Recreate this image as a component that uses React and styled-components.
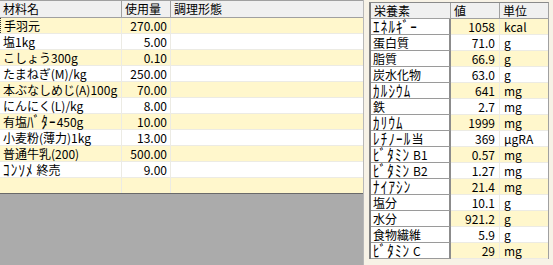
import React from "react";
import styled, { createGlobalStyle } from "styled-components";

const Global = createGlobalStyle`
  html, body { margin: 0; padding: 0; background: #f7f2e6; }
  body { font-family: "Noto Sans CJK JP", "Liberation Sans", sans-serif; font-size: 12px; color: #000; }
`;

const Screen = styled.div`
  width: 553px;
  height: 265px;
  display: flex;
  overflow: hidden;
  background: #f7f2e6;
`;

const LeftPanel = styled.div`
  width: 366px;
  display: flex;
  flex-direction: column;
  border-right: 1px solid #b8b8b8;
  background: #ababab;
`;

const Splitter = styled.div`
  width: 5px;
  background: #f7f2e6;
`;

const LeftRow = styled.div`
  display: grid;
  grid-template-columns: 122px 49px 1fr;
  height: ${(p) => (p.$head ? "16px" : "15px")};
  background: ${(p) => (p.$head ? "#f0f0f0" : p.$alt ? "#fff7cc" : "#ffffff")};
  border-bottom: 1px solid ${(p) => (p.$head ? "#a0a0a0" : p.$last ? "#6a6a6a" : "#ecebe4")};
  border-top: ${(p) => (p.$head ? "1px solid #a0a0a0" : "none")};
`;

const LeftCell = styled.div`
  padding: 0 3px;
  height: 100%;
  display: flex;
  align-items: center;
  justify-content: ${(p) => (p.$num ? "flex-end" : "flex-start")};
  border-right: 1px solid ${(p) => (p.$head ? "#a0a0a0" : "#ecebe4")};
  border-left: ${(p) => (p.$focus ? "1px dotted #333" : "none")};
  white-space: pre;
  line-height: 1;
  &:last-child { border-right: none; }
`;

const Fill = styled.div`
  flex: 1;
  background: #ababab;
`;

const RightPanel = styled.div`
  flex: 1;
  padding: 2px 4px 0 0;
  display: flex;
  flex-direction: column;
`;

const NutTable = styled.div`
  width: 177px;
  border-top: 1px solid #8a8a8a;
  border-left: 2px solid #808080;
  border-right: 1px solid #a0a0a0;
`;

const NutRow = styled.div`
  display: grid;
  grid-template-columns: 80px 49px 1fr;
  height: 16px;
`;

const NutHead = styled.div`
  background: #f0f0f0;
  padding: 0 3px;
  display: flex;
  align-items: center;
  line-height: 1;
  border-right: 1px solid #a0a0a0;
  border-bottom: 1px solid #a0a0a0;
  white-space: nowrap;
  &:last-child { border-right: none; }
`;

const NutName = styled.div`
  background: #ffffff;
  padding: 0 2px;
  display: flex;
  align-items: center;
  line-height: 1;
  border-right: 2px solid #8c8c8c;
  border-bottom: 1px solid #9a9a9a;
  white-space: pre;
  overflow: hidden;
`;

const NutVal = styled.div`
  background: ${(p) => (p.$alt ? "#fff7cc" : "#ffffff")};
  padding: 0 4px;
  display: flex;
  align-items: center;
  justify-content: ${(p) => (p.$num ? "flex-end" : "flex-start")};
  line-height: 1;
  border-right: ${(p) => (p.$num ? "1px solid #ecebe4" : "none")};
  border-bottom: 1px solid #ecebe4;
  white-space: nowrap;
`;

const Text = styled.span`
  white-space: pre;
  line-height: 1;
`;

const HalfKana = styled.span`
  display: inline-block;
  font-size: 13px;
  letter-spacing: 1.2px;
  line-height: 1;
  transform: scaleY(1.25);
`;

function Label({ text }) {
  const parts = text.split(/([\uFF61-\uFF9F]+)/);
  return (
    <Text>
      {parts.map((p, i) =>
        /[\uFF61-\uFF9F]/.test(p) ? <HalfKana key={i}>{p}</HalfKana> : <React.Fragment key={i}>{p}</React.Fragment>
      )}
    </Text>
  );
}

const ingredients = [
  ["手羽元", "270.00"],
  ["塩1kg", "5.00"],
  ["こしょう300g", "0.10"],
  ["たまねぎ(M)/kg", "250.00"],
  ["本ぶなしめじ(A)100g", "70.00"],
  ["にんにく(L)/kg", "8.00"],
  ["有塩ﾊﾞﾀｰ450g", "10.00"],
  ["小麦粉(薄力)1kg", "13.00"],
  ["普通牛乳(200)", "500.00"],
  ["ｺﾝｿﾒ 終売", "9.00"],
  ["", ""],
];

const nutrients = [
  ["ｴﾈﾙｷﾞｰ", "1058", "kcal"],
  ["蛋白質", "71.0", "g"],
  ["脂質", "66.9", "g"],
  ["炭水化物", "63.0", "g"],
  ["ｶﾙｼｳﾑ", "641", "mg"],
  ["鉄", "2.7", "mg"],
  ["ｶﾘｳﾑ", "1999", "mg"],
  ["ﾚﾁﾉｰﾙ当", "369", "μgRA"],
  ["ﾋﾞﾀﾐﾝ B1", "0.57", "mg"],
  ["ﾋﾞﾀﾐﾝ B2", "1.27", "mg"],
  ["ﾅｲｱｼﾝ", "21.4", "mg"],
  ["塩分", "10.1", "g"],
  ["水分", "921.2", "g"],
  ["食物繊維", "5.9", "g"],
  ["ﾋﾞﾀﾐﾝ C", "29", "mg"],
];

export default function App() {
  return (
    <>
      <Global />
      <Screen>
        <LeftPanel>
          <LeftRow $head>
            <LeftCell $head>材料名</LeftCell>
            <LeftCell $head>使用量</LeftCell>
            <LeftCell $head>調理形態</LeftCell>
          </LeftRow>
          {ingredients.map(([name, qty], i) => (
            <LeftRow key={i} $alt={i % 2 === 0} $last={i === ingredients.length - 1}>
              <LeftCell $focus={i === 0}><Label text={name} /></LeftCell>
              <LeftCell $num>{qty}</LeftCell>
              <LeftCell />
            </LeftRow>
          ))}
          <Fill />
        </LeftPanel>
        <Splitter />
        <RightPanel>
          <NutTable>
            <NutRow>
              <NutHead>栄養素</NutHead>
              <NutHead>値</NutHead>
              <NutHead>単位</NutHead>
            </NutRow>
            {nutrients.map(([n, v, u], i) => (
              <NutRow key={n}>
                <NutName><Label text={n} /></NutName>
                <NutVal $num $alt={i % 2 === 0}>{v}</NutVal>
                <NutVal $alt={i % 2 === 0}>{u}</NutVal>
              </NutRow>
            ))}
          </NutTable>
        </RightPanel>
      </Screen>
    </>
  );
}
